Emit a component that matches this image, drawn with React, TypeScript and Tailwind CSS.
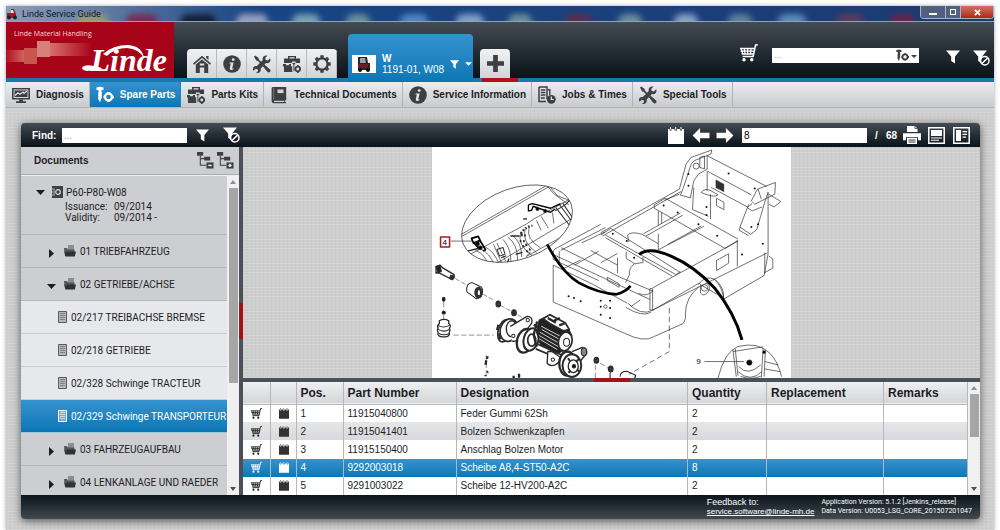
import type { ReactNode } from 'react';
import clsx from 'clsx';

type IconProps = { className?: string };

const Svg = ({ className, box = '0 0 18 18', children }: IconProps & { box?: string; children: ReactNode }) => (
  <svg viewBox={box} className={clsx('shrink-0', className)} fill="currentColor" aria-hidden="true">
    {children}
  </svg>
);

const HomeIcon = ({ className }: IconProps) => (
  <Svg className={className}>
    <path d="M9 .8 18 8.600l-1 1.200L9 3 1 9.800 0 8.600z" />
    <path d="M13.200 1h2.300v4l-2.300-2z" />
    <path fillRule="evenodd" d="M2.800 9.600 9 4.400l6.200 5.200V18h-4v-5.600H6.800V18h-4zM6.800 8.400v2h4.400v-2z" />
  </Svg>
);

const InfoIcon = ({ className }: IconProps) => (
  <Svg className={className}>
    <circle cx="9" cy="9" r="8.800" />
    <circle cx="10.200" cy="4.600" r="1.400" fill="#e4e5e7" />
    <path d="M6.600 7.500h4L9.300 13c-.2 1 .5.800 1.300.2v.8c-1.500 1.300-4.300 1.300-3.800-.8l1-4.600H6.500z" fill="#e4e5e7" />
  </Svg>
);

const ToolsIcon = ({ className }: IconProps) => (
  <Svg className={className}>
    <path d="M1 1.600 2.300.5l3.300 2.600.2 1.400 4 4-1.200 1.200-4-4-1.400-.2z" />
    <path d="m9.800 11.200 1.600-1.600 5.700 4.900c1.500 1.500-1.100 4.100-2.600 2.600z" />
    <path d="M17.200 3.300 14.800 5.600 12.700 5l-.5-2.100L14.500.6c-3-1-5.600 1.500-4.700 4.400L3.900 11c-3.300-.6-4.800 2.400-3.400 4.800l2.200-2 1.900.5.500 2-2 1.300c3 1.100 5.100-1 4.600-4L13 8.100c3.200.8 5.300-1.900 4.200-4.800z" />
  </Svg>
);

const ToolboxIcon = ({ className }: IconProps) => (
  <Svg className={className}>
    <path fillRule="evenodd" d="M5 3.500V1h8v2.500h4V8h-4.500V6.500H9V8H1V3.500zm1.500 0h5v-1.200h-5z" />
    <path d="M0 9h3v1.200h3V9h2v2.300h1.300V17H1v-5.600H0z" />
    <path d="M9 7.500h3.800v1.800h-1v6.500l-.9 1-.9-1V9.300H9z" stroke="#e0e1e4" strokeWidth=".8" />
    <circle cx="14.800" cy="14" r="2.300" fill="#e0e1e4" stroke="currentColor" strokeWidth="1.700" />
    <path d="M14 10h1.600v1.400H14zM14 16.500h1.600V18H14zM11.500 13.200h1.300v1.600h-1.300zM16.800 13.200H18v1.600h-1.200z" />
  </Svg>
);

const GearIcon = ({ className }: IconProps) => (
  <Svg className={className}>
    <circle cx="9" cy="9" r="5.600" fill="none" stroke="currentColor" strokeWidth="2.200" />
    {[0, 45, 90, 135, 180, 225, 270, 315].map((deg) => (
      <path key={deg} d="M7.300.3h3.400v3H7.300z" transform={`rotate(${deg} 9 9)`} />
    ))}
  </Svg>
);

const ScrewIcon = ({ className }: IconProps) => (
  <Svg className={className}>
    <path d="M.5 1.500Q4 0 7.500 1.500V4h-2v1.500l.6.800-.6.800.6.800-.6.800.6.800-.6.800.6.800-.6.800L4 16.500l-1.500-3-.6-.8.6-.8-.6-.8.6-.8-.6-.8.600-.8-.6-.8.600-.8V4h-2z" />
    <circle cx="12.500" cy="11" r="3.500" fill="none" stroke="currentColor" strokeWidth="2.400" />
    <path d="M11.200 6h2.600v2h-2.600zM11.200 14h2.600v2h-2.600zM7.500 9.700h2v2.600h-2zM15.500 9.700H18v2.600h-2.500z" />
  </Svg>
);

const MonitorIcon = ({ className }: IconProps) => (
  <Svg className={className}>
    <path fillRule="evenodd" d="M0 2h18v11.500H0zm1.600 1.600v8.300h14.800V3.600z" />
    <path d="M2.500 4.400h13v6.600h-13z" />
    <path d="m3 9.500 3-2.700 2 1.500L11 6l1 1.400L15 5" fill="none" stroke="#e4e5e7" strokeWidth="1.200" />
    <path d="M7 13.500h4v1.700h3V17H4v-1.800h3z" />
  </Svg>
);

const BookIcon = ({ className }: IconProps) => (
  <Svg className={className}>
    <path d="M2.500 1h13.700v13.500h-1.400V16H16v1.200H3.500Q1.600 17 1.600 15V2z" />
    <path d="M7.500 3.500h6v3.600h-6z" fill="#d5d6d9" />
    <path d="M4 14.800h10v1.200H4z" fill="#d5d6d9" />
    <path d="M3.700 2v11.500" stroke="#8a8c90" strokeWidth=".7" />
  </Svg>
);

const JobsIcon = ({ className }: IconProps) => (
  <Svg className={className}>
    <path d="M1 1h8v12M1 1v14.500h7" fill="none" stroke="currentColor" strokeWidth="1.500" />
    <path d="M2.800 4h4.600M2.800 6.500h4.600M2.800 9h4.600M2.800 12h4" stroke="currentColor" strokeWidth="1.400" />
    <path d="M10 3h2.500v6h-1.400V4.400H10z" />
    <circle cx="13.300" cy="13.300" r="4.400" />
    <path d="M13.300 10.500v3h2.400" fill="none" stroke="#e4e5e7" strokeWidth="1.200" />
  </Svg>
);

const CartIcon = ({ className }: IconProps) => (
  <Svg className={className}>
    <path d="M17.800.7 15.600 1l-2.500 11.500H2.600" fill="none" stroke="currentColor" strokeWidth="1.500" />
    <path d="M0 4.500h14.500M.7 7.200h13.500M1.600 10h12M1 4.500l2 6M4.300 4.500l.8 6M7.700 4.500v6M11 4.500l-.5 6" fill="none" stroke="currentColor" strokeWidth="1.300" />
    <circle cx="4" cy="15.800" r="1.700" />
    <circle cx="11.800" cy="15.800" r="1.700" />
  </Svg>
);

const FilterIcon = ({ className }: IconProps) => (
  <Svg className={className} box="0 0 14 14">
    <path d="M0 .5h14L9 6.500v7L5.200 11V6.500z" />
  </Svg>
);

const FilterOffIcon = ({ className }: IconProps) => (
  <Svg className={className} box="0 0 17 16">
    <path d="M0 .5h14L9 6.500v7L5.200 11V6.500z" />
    <circle cx="11.800" cy="10.800" r="4.200" fill="#161f27" stroke="currentColor" strokeWidth="1.500" />
    <path d="m9 13.500 5.600-5.400" stroke="currentColor" strokeWidth="1.500" />
  </Svg>
);

const NotepadIcon = ({ className }: IconProps) => (
  <Svg className={className} box="0 0 16 17">
    <path d="M0 2h1.500v1.500h2V2h3v1.500h2.500V2h3v1.500h2V2h2v15H0z" />
    <path d="M2.500 0v2.500M7.700 0v2.500M13 0v2.500" stroke="currentColor" strokeWidth="1.100" />
  </Svg>
);

const ArrowIcon = ({ className }: IconProps) => (
  <Svg className={className} box="0 0 18 16">
    <path d="m0 8 8-8v5h10v6H8v5z" />
  </Svg>
);

const PrinterIcon = ({ className }: IconProps) => (
  <Svg className={className} box="0 0 18 18">
    <path d="M4 0h8l2.500 2.500V6H4zM0 7.200h18v7h-3v-3H3v3H0z" />
    <path d="M4 12h10v6H4z" />
    <path d="M5.500 14h7M5.500 16h7" stroke="#1a232b" strokeWidth=".9" />
    <path d="M12 0v2.500h2.500" fill="none" stroke="#1a232b" strokeWidth=".7" />
  </Svg>
);

const SplitRowsIcon = ({ className }: IconProps) => (
  <Svg className={className} box="0 0 17 17">
    <path d="M.8.800h15.400v15.400H.8z" fill="none" stroke="currentColor" strokeWidth="1.500" />
    <path d="M3 3h11v6H3zM3 10.500h11v1H3zM3 12.800h8v1H3z" />
  </Svg>
);

const SplitColsIcon = ({ className }: IconProps) => (
  <Svg className={className} box="0 0 17 17">
    <path d="M.8.800h15.400v15.400H.8z" fill="none" stroke="currentColor" strokeWidth="1.500" />
    <path d="M3 3h5v11H3zM9.500 4h4.500v1.200H9.500zM9.500 6.800h4.500V8H9.500zM9.500 9.500h3.500v1.200H9.500z" />
  </Svg>
);

const TreeIcon = ({ className, plus }: IconProps & { plus?: boolean }) => (
  <Svg className={className}>
    <path d="M0 0h6.500v4H0zM7.500 5h6.500v4H7.500z" />
    <path d="M3.500 4v10h6M3.500 7h4" fill="none" stroke="currentColor" strokeWidth="1.100" />
    <path d="M10 11h7.500v6.500H10z" />
    <path d={plus ? 'M12 14.200h3.500M13.700 12.500V16' : 'M12 14.200h3.500'} stroke="#e8e9eb" strokeWidth="1.600" />
  </Svg>
);

const FolderIcon = ({ className }: IconProps) => (
  <Svg className={className} box="0 0 12 12">
    <path d="M4 0h6v5H4z" fill="#8b8d90" />
    <path d="M0 3h3l1 1.500h6.500V11H1z" fill="#55575a" />
    <path d="m0 5.500 1.500 6h9.300l1.200-5H3L1.800 8z" fill="#2f3133" />
  </Svg>
);

const DocIcon = ({ className }: IconProps) => (
  <Svg className={className} box="0 0 9 12">
    <path d="M.5.500h8v11h-8z" fill="currentColor" fillOpacity=".35" stroke="currentColor" />
    <path d="M2 2.500h5M2 4.500h5M2 6.500h5M2 8.500h5" stroke="currentColor" strokeWidth="1.200" opacity=".6" />
  </Svg>
);

const navItems = [
  { label: 'Diagnosis', icon: MonitorIcon },
  { label: 'Spare Parts', icon: ScrewIcon, active: true },
  { label: 'Parts Kits', icon: ToolboxIcon },
  { label: 'Technical Documents', icon: BookIcon },
  { label: 'Service Information', icon: InfoIcon },
  { label: 'Jobs & Times', icon: JobsIcon },
  { label: 'Special Tools', icon: ToolsIcon },
];

const quickTabs = [
  { label: 'Home', icon: HomeIcon },
  { label: 'Information', icon: InfoIcon },
  { label: 'Tools', icon: ToolsIcon },
  { label: 'Kits', icon: ToolboxIcon },
  { label: 'Settings', icon: GearIcon },
];

const parts = [
  { pos: 1, number: '11915040800', name: 'Feder Gummi 62Sh', qty: 2 },
  { pos: 2, number: '11915041401', name: 'Bolzen Schwenkzapfen', qty: 2 },
  { pos: 3, number: '11915150400', name: 'Anschlag Bolzen Motor', qty: 2 },
  { pos: 4, number: '9292003018', name: 'Scheibe A8,4-ST50-A2C', qty: 8, selected: true },
  { pos: 5, number: '9291003022', name: 'Scheibe 12-HV200-A2C', qty: 2 },
];

const documents = [
  { label: '02/217 TREIBACHSE BREMSE' },
  { label: '02/218 GETRIEBE' },
  { label: '02/328 Schwinge TRACTEUR' },
  { label: '02/329 Schwinge TRANSPORTEUR', selected: true },
];

// desktop icons shining through the glass title bar
const glassSpots = [
  'left-[70px] w-8 bg-[#a8a06a]',
  'left-[120px] w-8 bg-[#7c1f3a]',
  'left-[174px] w-9 bg-[#0b1220]',
  'left-[230px] w-8 bg-[#b9b6cf]',
  'left-[286px] w-7 bg-[#8fb9c4]',
  'left-[340px] w-6 bg-[#7fa3a6]',
  'left-[394px] w-7 bg-[#5f97d4]',
  'left-[450px] w-7 bg-[#9ab8dc]',
  'left-[502px] w-6 bg-[#7fa3a6]',
  'left-[558px] w-7 bg-[#6b2a48]',
  'left-[612px] w-6 bg-[#7fa3a6]',
  'left-[668px] w-6 bg-[#a4bddd]',
  'left-[722px] w-6 bg-[#6f94a6]',
  'left-[772px] w-7 bg-[#6aa0c8]',
  'left-[830px] w-7 bg-[#6b3a58]',
  'left-[884px] w-6 bg-[#7c1f3a]',
];

const darkBar = 'bg-linear-to-b from-[#454c53] to-[#0b131a]';
const blueFill = 'bg-linear-to-b from-[#3492cf] to-[#0877b5]';
const canvasTexture =
  'bg-[#cecece] bg-[repeating-linear-gradient(0deg,rgba(255,255,255,.14)_0_1px,transparent_1px_3px),repeating-linear-gradient(90deg,rgba(120,120,120,.05)_0_1px,transparent_1px_4px)]';

const TitleBar = () => (
  <div className="relative flex h-4 shrink-0 items-center justify-between overflow-hidden border-b border-[#8ea3b8] bg-linear-to-r from-[#8f9db8] via-[#174684] via-25% to-[#1c3a72]">
    {glassSpots.map((spot) => (
      <span key={spot} className={clsx('absolute top-2 h-4 rounded-full opacity-80 blur-[3px]', spot)} />
    ))}
    <div className="relative flex items-center gap-1">
      <svg viewBox="0 0 12 12" className="h-3 w-3" aria-hidden="true">
        <path d="M1 5h4V1h3l2 5v4H1z" fill="#a3172c" />
        <path d="M5 2h2l1 3H5z" fill="#e3e6ec" />
        <circle cx="3" cy="9.500" r="2" fill="#222" />
        <circle cx="9" cy="9.500" r="2" fill="#222" />
      </svg>
      <span className="font-[Roboto,sans-serif] text-[9px] leading-3 text-[#0c1422]">Linde Service Guide</span>
    </div>
    <div className="relative flex h-[13px] self-start overflow-hidden rounded-b border border-t-0 border-[#a9b3c6]">
      <button type="button" aria-label="Minimize" className="flex w-6 items-center justify-center bg-[#51607f]">
        <span className="mt-1 h-[2px] w-2 bg-white" />
      </button>
      <button type="button" aria-label="Restore" className="flex w-4 items-center justify-center border-x border-[#a9b3c6] bg-[#51607f]">
        <span className="h-[6px] w-[6px] border border-white" />
      </button>
      <button type="button" aria-label="Close" className="flex w-8 items-center justify-center bg-linear-to-b from-[#d0705f] to-[#ad2512] text-white">
        <svg viewBox="0 0 8 8" className="h-[7px] w-[7px]" aria-hidden="true">
          <path d="m1 1 6 6M7 1 1 7" stroke="currentColor" strokeWidth="2" />
        </svg>
      </button>
    </div>
  </div>
);

const Logo = () => (
  <div className="relative w-[168px] shrink-0 overflow-hidden bg-[#a80419]">
    <svg viewBox="0 0 168 56" className="absolute inset-0 h-full w-full" aria-hidden="true">
      <defs>
        <linearGradient id="tail">
          <stop offset="0" stopColor="#e58a80" stopOpacity=".8" />
          <stop offset="1" stopColor="#e58a80" stopOpacity="0" />
        </linearGradient>
        <linearGradient id="lead">
          <stop offset="0" stopColor="#e58a80" stopOpacity=".1" />
          <stop offset="1" stopColor="#e58a80" stopOpacity=".7" />
        </linearGradient>
      </defs>
      <path d="M0 28h18v12H0z" fill="url(#lead)" />
      <path d="M18 26h13v16H18z" fill="#c8564f" />
      <path d="M31 19h13v16H31z" fill="#d98078" />
      <path d="M44 21h42v13H44z" fill="url(#tail)" />
      <path d="M97 32q10-9 25-9 14 1 16 13-5-9-17-10-12 0-20 8z" fill="#fff" />
      <path d="M76 46q2-4 12-2l8 2-2 2q-8 0-13 1-5-1-5-3z" fill="#fff" />
    </svg>
    <div className="relative flex h-full flex-col justify-between pt-1 pr-[7px] pl-2">
      <span className="font-['Open_Sans',sans-serif] text-[7px] leading-4 text-[#f3d5d5]">Linde Material Handling</span>
      <span className="self-end font-['Liberation_Serif',serif] text-[32px] leading-9 font-bold text-white italic">Linde</span>
    </div>
  </div>
);

const Header = () => (
  <header className={clsx('flex h-[60px] shrink-0 border-b-4 border-[#1b76ab]', darkBar)}>
    <Logo />
    <div className="ml-[13px] flex items-end gap-[11px]">
      <nav className="flex h-[29px] overflow-hidden rounded-t bg-linear-to-b from-[#f0f1f2] to-[#d3d4d8]">
        {quickTabs.map(({ label, icon: Icon }) => (
          <button key={label} type="button" aria-label={label} className="flex w-[30px] items-center justify-center border-r border-[#b7b9bd] text-[#3d3f42]">
            <Icon className="h-[18px] w-[18px]" />
          </button>
        ))}
      </nav>
      <div className={clsx('-mb-1 flex h-12 w-[125px] items-center gap-[6px] rounded-t pt-3 pl-1', blueFill)}>
        <svg viewBox="0 0 24 18" className="h-[18px] w-6 shrink-0 bg-white" aria-hidden="true">
          <path d="M6 2h9l1 6h2v7H6z" fill="#2b2426" />
          <path d="M8 3h5l1 5H8z" fill="#9aa0a6" />
          <path d="M6 9h10v4H6z" fill="#6b1c24" />
          <circle cx="8" cy="15" r="2" fill="#111" />
          <circle cx="16" cy="15" r="2" fill="#111" />
        </svg>
        <div className="grow text-[10px] leading-[11px] whitespace-nowrap text-white">
          <p className="font-bold">W</p>
          <p>1191-01, W08</p>
        </div>
        <button type="button" aria-label="Filter machine" className="text-white">
          <FilterIcon className="h-[9px] w-[9px]" />
        </button>
        <button type="button" aria-label="Machine menu" className="mr-1 text-white">
          <Svg box="0 0 8 4" className="h-1 w-[7px]">
            <path d="M0 0h8L4 4z" />
          </Svg>
        </button>
      </div>
      <div className="relative -ml-1 flex">
        <button type="button" aria-label="New tab" className="flex h-[29px] w-[30px] items-center justify-center rounded-t bg-linear-to-b from-[#f0f1f2] to-[#d3d4d8] text-[#3d3f42]">
          <Svg className="h-[17px] w-[17px]">
            <path d="M6.500 0h5v6.500H18v5h-6.500V18h-5v-6.500H0v-5h6.500z" />
          </Svg>
        </button>
        <span className="absolute -bottom-1 left-[2px] h-1 w-9 bg-[#b3121d]" />
      </div>
    </div>
    <div className="mt-[22px] mr-1 ml-auto flex items-start text-white">
      <button type="button" aria-label="Shopping cart">
        <CartIcon className="h-[18px] w-[18px]" />
      </button>
      <div className="mt-1 ml-[14px] flex h-[15px] w-[147px] bg-white">
        <input aria-label="Search parts" placeholder="..." className="min-w-0 grow px-[2px] text-[9px] text-black outline-none placeholder:text-gray-400" />
        <button type="button" aria-label="Search type" className="flex items-center gap-[2px] pr-[2px] text-[#3d3f42]">
          <ScrewIcon className="h-[13px] w-[13px]" />
          <Svg box="0 0 6 3" className="mt-[2px] h-[3px] w-[6px]">
            <path d="M0 0h6L3 3z" />
          </Svg>
        </button>
      </div>
      <button type="button" aria-label="Apply filter" className="mt-[6px] ml-[27px]">
        <FilterIcon className="h-[14px] w-[14px]" />
      </button>
      <button type="button" aria-label="Clear filter" className="mt-[6px] ml-[13px]">
        <FilterOffIcon className="h-4 w-[17px]" />
      </button>
    </div>
  </header>
);

const MainNav = () => (
  <nav className="flex h-[26px] shrink-0 border-b border-[#b4b5b8] bg-linear-to-b from-[#ecedef] to-[#c9cacf]">
    {navItems.map(({ label, icon: Icon, active }) => (
      <a
        key={label}
        href="#"
        className={clsx(
          'flex items-center gap-[6px] border-r pr-[5px] pl-[6px] text-[10px] font-bold whitespace-nowrap',
          active ? ['border-[#1b84c0] text-white', blueFill] : 'border-[#b1b3b7] text-[#1c1d1f]',
        )}
      >
        <Icon className={clsx('h-[18px] w-[18px]', !active && 'text-[#3d3f42]')} />
        {label}
      </a>
    ))}
  </nav>
);

const PanelToolbar = () => (
  <div className={clsx('flex h-6 shrink-0 items-center rounded-t-sm pr-[10px] pl-[11px] text-white', darkBar)}>
    <label htmlFor="find" className="w-[30px] text-[10px] font-bold">Find:</label>
    <input id="find" placeholder="..." className="h-[15px] w-[125px] bg-white px-[2px] text-[10px] text-black outline-none placeholder:text-gray-400" />
    <button type="button" aria-label="Find" className="ml-[9px]">
      <FilterIcon className="h-[13px] w-[13px]" />
    </button>
    <button type="button" aria-label="Reset find" className="ml-[14px]">
      <FilterOffIcon className="h-4 w-[17px]" />
    </button>
    <button type="button" aria-label="Notes" className="ml-auto">
      <NotepadIcon className="h-[17px] w-4" />
    </button>
    <button type="button" aria-label="Previous page" className="ml-2">
      <ArrowIcon className="h-[15px] w-[18px]" />
    </button>
    <button type="button" aria-label="Next page" className="ml-[6px]">
      <ArrowIcon className="h-[15px] w-[18px] rotate-180" />
    </button>
    <input aria-label="Page" defaultValue="8" className="ml-2 h-[15px] w-[125px] bg-white px-[2px] text-[10px] text-black outline-none" />
    <span className="ml-2 flex gap-2 text-[10px] font-bold">
      <span>/</span>
      <span>68</span>
    </span>
    <button type="button" aria-label="Print" className="ml-[6px]">
      <PrinterIcon className="h-[18px] w-[18px]" />
    </button>
    <button type="button" aria-label="Split rows" className="ml-[7px]">
      <SplitRowsIcon className="h-[17px] w-[17px]" />
    </button>
    <button type="button" aria-label="Split columns" className="ml-2">
      <SplitColsIcon className="h-[17px] w-[17px]" />
    </button>
  </div>
);

const ScrollBar = ({ thumb }: { thumb: string }) => (
  <div className="flex w-3 shrink-0 flex-col items-center bg-[#f0f0f1] py-1 text-[#4d4f52]">
    <Svg box="0 0 6 4" className="h-1 w-[6px] text-[#8d8f92]">
      <path d="M3 0l3 4H0z" />
    </Svg>
    <div className="my-1 min-h-0 w-[9px] grow">
      <div className={clsx('bg-[#a6a6a7]', thumb)} />
    </div>
    <Svg box="0 0 6 4" className="h-1 w-[6px]">
      <path d="M0 0h6L3 4z" />
    </Svg>
  </div>
);

const FolderRow = ({ label, open }: { label: string; open?: boolean }) => (
  <li className="flex h-[33px] shrink-0 items-center border-b border-[#b3b5b9] bg-[#cdced2] pl-[26px]">
    <Svg box="0 0 9 9" className={clsx('mt-1 mr-2 h-[9px] w-[9px]', open && 'rotate-90')}>
      <path d="M2 0l5 4.500L2 9z" />
    </Svg>
    <FolderIcon className="mr-1 h-3 w-3" />
    {label}
  </li>
);

const Sidebar = () => (
  <aside className="flex min-h-0 w-[218px] shrink-0 flex-col bg-[#cdced2] text-[#1c1d1f]">
    <div className="flex h-7 shrink-0 items-center border-b border-[#a9abaf] pr-[5px] pl-[13px]">
      <h2 className="grow text-[10px] font-bold">Documents</h2>
      <button type="button" aria-label="Collapse all" className="mr-[3px] text-[#3d3f42]">
        <TreeIcon className="h-[17px] w-[17px]" />
      </button>
      <button type="button" aria-label="Expand all" className="text-[#3d3f42]">
        <TreeIcon plus className="h-[17px] w-[17px]" />
      </button>
    </div>
    <div className="flex min-h-0 grow border-t border-[#eeeff0]">
      <ul className="flex min-h-0 min-w-0 grow flex-col overflow-hidden font-[Roboto,sans-serif] text-[10px] whitespace-nowrap">
        <li className="h-[59px] shrink-0 border-b border-[#b3b5b9] pt-[10px] pl-[15px] leading-[11px]">
          <div className="flex items-center">
            <Svg box="0 0 9 5" className="mr-[6px] h-[5px] w-[9px]">
              <path d="M0 0h9L4.500 5z" />
            </Svg>
            <Svg box="0 0 12 12" className="mr-[3px] h-3 w-3 text-[#3d3f42]">
              <path d="M1 0h11v12H1z" />
              <circle cx="7" cy="6" r="2.300" fill="none" stroke="#d5d6d9" strokeWidth="1.200" />
              <path d="M3 2v8M0 3h2M0 6h2M0 9h2" stroke="#d5d6d9" strokeWidth=".8" />
            </Svg>
            P60-P80-W08
          </div>
          <dl className="mt-[3px] ml-[29px] grid grid-cols-[49px_auto] leading-[11px]">
            <dt>Issuance:</dt>
            <dd>09/2014</dd>
            <dt>Validity:</dt>
            <dd>09/2014 -</dd>
          </dl>
        </li>
        <FolderRow label="01 TRIEBFAHRZEUG" />
        <FolderRow label="02 GETRIEBE/ACHSE" open />
        {documents.map((doc) => (
          <li
            key={doc.label}
            className={clsx(
              'flex h-[33px] shrink-0 items-center gap-1 border-b pl-[37px]',
              doc.selected ? ['border-[#9fcbe6] text-white', blueFill] : 'border-[#cbccd0] bg-[#e7e8eb]',
            )}
          >
            <DocIcon className={clsx('h-3 w-[9px]', !doc.selected && 'text-[#5a5c5f]')} />
            {doc.label}
          </li>
        ))}
        <FolderRow label="03 FAHRZEUGAUFBAU" />
        <FolderRow label="04 LENKANLAGE UND RAEDER" />
      </ul>
      <ScrollBar thumb="h-[66%]" />
    </div>
  </aside>
);

const ChassisDrawing = () => (
  <g transform="translate(600 145) scale(.3333)" strokeWidth="2">
    {/* rear wall */}
    <path d="M235 135l-235 130M240 142L5 275M235 135l20-75 15-20 62-22-3 12-50 20-8 8-25 75-8 20 32 8" />
    <path d="M268 160l10-50 14-20 26-15V35l178 92M320 82l130 70M318 80v60M330 130l108 58M328 150v75M278 130l-4 66 48 20" />
    <path d="M300 145q10-15 30-5l20 12q-10 10-50-7zM346 162v22l22 12v-22z" />
    <path d="M344 107l24 13v23l-24-12z" fill="#333" strokeWidth="1" />
    <path d="M450 170l18-35 54-20-2 35-60 30zM470 135l10 30M452 178l-14 12 14 10 30-12" />
    <path d="M442 180l-26 68 32 22 18-14 24-82 10-30v184l-12 65-120 70q-6-38-28-58M416 248l-2 10 28 16" />
    <path d="M502 150l36 22-20 16-16-8M502 335l12 8v28l-26 14M490 325v62M408 288v78" />
    <circle cx="285" cy="66" r="9" />
    <path d="M296 40v30l14 4V36z" />
    {/* cross beams */}
    <path d="M160 182l32-20 218 122M160 182v10l212 120 38-24M235 150l-45 18M0 272l30-20 208 132M14 272l210 118 14-8M14 280l200 115" />
    <path d="M172 200v42M182 204v34M128 268l110-62M135 275l110-62M168 318l140-72M172 268v46M200 300l100-55" />
    <path d="M80 272q12-12 44-2l48 28M80 272l4 20M410 290L155 430M498 325L155 496" />
    <path d="M346 348l36-20v28l-36 22z" />
    <path d="M76 322v20l26 16 24-4V338M100 358q-18 16-14 32l-12 25" />
    {/* front frame */}
    <path d="M-56 295L14 262M-120 318L14 250M-130 310l130-70M-130 310q-14 4-12 20v15L-6 408M-118 310l180 90 95 40M-142 330l290 135M-124 320v38M-142 362v110M-142 362l120 58 100 55" />
    <path d="M155 432v64h-8v-64zM-6 320l-72 42M-110 372l50-26M50 340v46M-30 318l80 44M0 355l50-28M155 440q-20 18-42 6M20 398l35 20v10l-35-20zM90 486l28-20" />
    <path d="M-142 472L70 565q60 30 90 10l85-38q10-10 8-30 0-48 40-80M80 475q40 40 75 22L295 415M75 488q48 30 75 15" />
    <path d="M292 420q20-30 50-15 28 24 25 55l-70-40M298 420v25q10 14 24-5 8-20-8-25" />
    <circle cx="310" cy="430" r="10" />
    <path d="M205 490v130L85 688" strokeDasharray="16 10" />
    <g fill="#111" stroke="none">
      {[[262, 90], [262, 125], [292, 240], [348, 274], [230, 205], [188, 184], [382, 88], [460, 133], [422, 330], [484, 298], [470, 240], [450, 248], [316, 188], [316, 212], [78, 290], [36, 268], [100, 340], [0, 468], [0, 486], [28, 468], [28, 490], [28, 520], [0, 510], [-96, 455], [-80, 460], [-60, 470]].map(
        ([x, y]) => <circle key={`${x}-${y}`} cx={x} cy={y} r="3" />,
      )}
    </g>
    <circle cx="14" cy="486" r="5" />
    {/* leader lines */}
    <g stroke="#000" strokeWidth="9">
      <path d="M115 330q30-25 95 5 70 30 130 95 60 75 82 155" />
      <path d="M-160 300q45 85 95 115 60 32 112 34 25-5 42-25" strokeWidth="8" />
    </g>
    {/* detail bubble 9 */}
    <path d="M350 700q20-80 60-95 60-15 95 20 25 25 35 70M395 615l10 80M402 612l8 80M485 610l-5 88M492 615l-4 80M395 620l90-14M412 665q28 30 66-5M410 680q36 34 72 0M418 694q28 12 60 0M490 650l40 10M490 672l46 8M310 650h118" />
    <circle cx="444" cy="653" r="8" fill="#000" />
    <circle cx="488" cy="622" r="4" fill="#000" />
    <path d="M58 695q0-16 20-16l26 12-4 12M105 690l-4 12" strokeWidth="3" />
    <circle cx="29" cy="672" r="7" fill="#333" />
    <path d="M29 675v25" />
  </g>
);

const BubbleDrawing = () => (
  <g transform="translate(430 145) scale(.3333)" strokeWidth="2">
    <clipPath id="bubble">
      <ellipse cx="260" cy="238" rx="172" ry="106" transform="rotate(-20 260 238)" />
    </clipPath>
    <ellipse cx="260" cy="238" rx="172" ry="106" transform="rotate(-20 260 238)" />
    <g clipPath="url(#bubble)">
      <path d="M90 272L355 120M92 278L358 126M345 118l24 30 46 34M350 118l30 36 50 20" />
      <path d="M110 335L290 238l20-14 110-60M190 362L425 222M318 228l14 30M332 216l22 36M366 205l4 32M300 322l-12 14 130-72" />
      <path d="M376 190l40 52M386 180l40 54M396 176l34 50M374 200l30-18 20-20" strokeWidth="3" />
      <path d="M136 318q30 10 40 50M150 312q30 15 42 50M166 308q26 14 40 50M190 300l25 58M200 296l26 54M218 285q24 25 24 68M232 278q30 20 30 70M246 272q28 22 28 66" />
      <path d="M200 315l18-6 6 20-16 6zM212 340l16-6" strokeWidth="3" />
      <path d="M272 262q-14 40 34 72M284 254q-10 40 34 70M296 250q-10 34 34 60" />
      <path d="M272 268q10-20 34-24M268 290h16M276 306l14-6M288 322l12-8M272 272l14 2" strokeWidth="7" strokeDasharray="5 5" />
      <path d="M240 275h28M256 330l20-6M112 320l40-10M180 368l60-6M226 368l10-26" strokeWidth="4" />
    </g>
    <path d="M294 182l12-4 54 14 30-14M294 182v18l10-2 4-12 52 18 14-10" stroke="#000" strokeWidth="4" />
    <circle cx="321" cy="194" r="5" fill="#000" />
    <circle cx="344" cy="200" r="5" fill="#000" />
    <path d="M278 224h12" strokeWidth="4" />
    <path d="M124 282l20-6 6 12-20 8zM130 294l18 20M148 286l18 30-8 4" stroke="#000" strokeWidth="5" />
    <circle cx="142" cy="298" r="6" fill="#000" />
    <circle cx="150" cy="310" r="6" fill="#000" />
    <path d="M62 290h64" />
  </g>
);

const AxleDrawing = () => (
  <g transform="translate(430 255) scale(.3333)" strokeWidth="3">
    <path d="M18 36l12-4 8 8 34 20v10l-8 4-38-20-8 2z" strokeWidth="4" />
    <path d="M18 36l12-4 4 18-10 6z" fill="#222" />
    <path d="M62 62l10 2-4 12-10-4z" fill="#333" />
    <path d="M76 72l30 18M158 118l34 20M210 152l34 18M262 180l26 16" strokeWidth="1.500" strokeDasharray="14 6" />
    <path d="M110 112q-4-26 16-28l28 14q8 12-4 30l-12 4z" />
    <ellipse cx="145" cy="114" rx="11" ry="16" fill="#333" />
    <ellipse cx="146" cy="114" rx="5" ry="9" fill="#fff" />
    {[[204, 148], [251, 174], [497, 316], [540, 342]].map(([x, y]) => (
      <g key={x}>
        <ellipse cx={x} cy={y} rx="7" ry="9" fill="#333" />
        <ellipse cx={x} cy={y} rx="2" ry="4" fill="#bbb" />
      </g>
    ))}
    <ellipse cx="41" cy="134" rx="4" ry="6" fill="#111" />
    <ellipse cx="41" cy="174" rx="5" ry="4" fill="#111" />
    <path d="M41 142v28M41 180v14M70 241h120M168 300v60M508 325l26 14M494 330v50M536 354v20" strokeWidth="1.500" strokeDasharray="16 7" />
    <path d="M28 198q14-8 28 0v8q8 6 2 14 4 6 0 12 2 16-18 14-20 0-16-14-4-6 0-12-4-8 4-14z" strokeWidth="4" />
    <path d="M24 212q16 10 34 0M24 224q16 10 34 0M26 236q16 8 32 0" />
    {/* left hub */}
    <ellipse cx="222" cy="228" rx="18" ry="34" fill="#fff" strokeWidth="5" transform="rotate(15 222 228)" />
    <ellipse cx="236" cy="226" rx="26" ry="34" fill="#fff" strokeWidth="5" transform="rotate(15 236 226)" />
    <ellipse cx="244" cy="222" rx="16" ry="24" strokeWidth="4" />
    <path d="M240 215l50-30q18 0 14 20l-34 44q-10 12-26 10" fill="#fff" strokeWidth="4" />
    <circle cx="292" cy="196" r="5" />
    <circle cx="249" cy="243" r="5" />
    <path d="M204 210l-4 16M206 236l4 18" strokeWidth="6" />
    {/* brake drum */}
    <ellipse cx="284" cy="258" rx="24" ry="36" fill="#fff" strokeWidth="7" transform="rotate(15 284 258)" />
    <ellipse cx="302" cy="254" rx="22" ry="34" fill="#fff" strokeWidth="6" transform="rotate(15 302 254)" />
    <ellipse cx="304" cy="256" rx="12" ry="18" strokeWidth="5" />
    {/* motor */}
    <path d="M318 232l8-36 34-16 50 34 14 28-12 40-32 14-50-26z" fill="#222" />
    <path d="M332 214l68 36M330 222l68 38M328 232l66 38M326 242l62 36M326 252l54 32" stroke="#eee" strokeWidth="2.500" />
    <path d="M338 192l20-12 46 24 12 20-18 4-40-22z" fill="#fff" strokeWidth="5" />
    <path d="M352 190l24 14M370 198l18-8M386 212l16-6" strokeWidth="7" />
    <ellipse cx="404" cy="260" rx="20" ry="28" fill="#fff" strokeWidth="5" transform="rotate(15 404 260)" />
    <ellipse cx="408" cy="262" rx="9" ry="12" fill="#fff" />
    <path d="M320 200l-10 40 8 36M310 210l24 14" strokeWidth="7" />
    {/* axle and right hub */}
    <path d="M322 268l80 36M316 282l76 32" strokeWidth="5" />
    <path d="M352 290l-2 36q14 12 30 0l14-16-30-20z" fill="#fff" strokeWidth="4" />
    <circle cx="367" cy="314" r="5" />
    <path d="M424 290l30-12q16 2 14 18l-22 26" fill="#fff" strokeWidth="4" />
    <ellipse cx="460" cy="291" rx="8" ry="12" fill="#888" />
    <ellipse cx="410" cy="326" rx="24" ry="36" fill="#fff" strokeWidth="7" />
    <ellipse cx="424" cy="332" rx="28" ry="34" fill="#fff" strokeWidth="6" />
    <ellipse cx="428" cy="334" rx="15" ry="19" strokeWidth="4" />
    <circle cx="430" cy="334" r="5" fill="#111" />
    <path d="M412 310l6 8M444 312l-6 8M414 354l6-8M446 350l-6-6" strokeWidth="6" />
    <path d="M172 304l-2 8M168 316l-2 14M174 350l-4 2M166 360v4M250 362v10M266 356v12" strokeWidth="7" />
  </g>
);

const Diagram = () => (
  <div className={clsx('flex min-h-0 shrink grow basis-0 justify-center', canvasTexture)}>
    <svg viewBox="432 148 358 230" className="h-full bg-white" role="img" aria-label="Axle assembly">
      <g fill="none" stroke="#2a2a2a" strokeLinejoin="round">
        <ChassisDrawing />
        <BubbleDrawing />
        <AxleDrawing />
        <path d="M440.500 237.500h9v10h-9z" stroke="#a31e22" strokeWidth="1.500" />
      </g>
      <text x="442.500" y="245.500" className="text-[8px]">4</text>
      <text x="695" y="364.500" className="text-[8px]">9</text>
    </svg>
  </div>
);

const headCell = 'border-r border-[#b5b7ba] pl-1 text-left text-[12px] font-bold';

const PartsTable = () => (
  <div className="flex h-[113px] shrink-0 overflow-hidden bg-white text-[#1c1d1f]">
    <table className="w-full min-w-0 table-fixed border-collapse text-[10px]">
      <colgroup>
        <col className="w-[27px]" />
        <col className="w-[26px]" />
        <col className="w-[47px]" />
        <col className="w-[113px]" />
        <col />
        <col className="w-[79px]" />
        <col className="w-[117px]" />
        <col className="w-[84px]" />
      </colgroup>
      <thead>
        <tr className="h-[22px] border-b border-[#b5b7ba] bg-linear-to-b from-[#eeeff0] to-[#d4d6d9]">
          <th className={headCell} aria-label="Cart" />
          <th className={headCell} aria-label="Notes" />
          <th className={headCell}>Pos.</th>
          <th className={headCell}>Part Number</th>
          <th className={headCell}>Designation</th>
          <th className={headCell}>Quantity</th>
          <th className={headCell}>Replacement</th>
          <th className={headCell}>Remarks</th>
        </tr>
      </thead>
      <tbody>
        {parts.map((part) => (
          <tr
            key={part.pos}
            className={clsx(
              'h-[18px] *:border-r *:border-[#b5b7ba] *:py-0 *:pl-1',
              part.selected && ['text-white', blueFill],
              part.pos === 2 && 'bg-linear-to-b from-[#e6e7e9] to-[#d7d9dc]',
            )}
          >
            <td>
              <button type="button" aria-label={`Add ${part.number} to cart`} className="ml-1 block">
                <CartIcon className="h-[11px] w-[11px]" />
              </button>
            </td>
            <td>
              <button type="button" aria-label={`Note for ${part.number}`} className="ml-1 block">
                <NotepadIcon className={clsx('h-[11px] w-[10px]', !part.selected && 'text-[#333]')} />
              </button>
            </td>
            <td>{part.pos}</td>
            <td>{part.number}</td>
            <td>{part.name}</td>
            <td>{part.qty}</td>
            <td />
            <td />
          </tr>
        ))}
      </tbody>
    </table>
    <ScrollBar thumb="h-[48%]" />
  </div>
);

const Footer = () => (
  <footer className="flex h-6 shrink-0 items-center justify-end gap-[7px] rounded-b-sm bg-linear-to-b from-[#0d151c] to-[#414a51] pr-2 text-white">
    <div className="text-[9px] leading-[10px]">
      <p>Feedback to:</p>
      <a href="mailto:service.software@linde-mh.de" className="block text-[8px] leading-[10px] underline">service.software@linde-mh.de</a>
    </div>
    <div className="font-[Roboto,sans-serif] text-[7px] leading-[9px]">
      <p>Application Version: 5.1.2 [Jenkins_release]</p>
      <p>Data Version: U0053_LSG_CORE_201507201047</p>
    </div>
  </footer>
);

const App = () => (
  <div className="flex h-screen flex-col overflow-hidden bg-white px-[6px] pt-[6px] font-['Liberation_Sans',Arial,sans-serif]">
    <div className="flex min-h-0 grow flex-col shadow-[0_0_4px_#9aa4ae]">
      <TitleBar />
      <Header />
      <MainNav />
      <main className={clsx('flex min-h-0 grow flex-col pt-[15px] pr-[14px] pb-[11px] pl-[15px]', canvasTexture)}>
        <div className="flex min-h-0 grow flex-col rounded-sm shadow-[0_2px_8px_#555]">
          <PanelToolbar />
          <div className="flex min-h-0 grow bg-[#4b5157]">
            <Sidebar />
            <div className="flex w-1 shrink-0 items-center">
              <span className="h-9 w-full bg-[#a3121b]" />
            </div>
            <section className="flex min-w-0 grow flex-col">
              <Diagram />
              <div className="flex h-1 shrink-0 justify-center">
                <span className="h-full w-9 bg-[#a3121b]" />
              </div>
              <PartsTable />
            </section>
          </div>
          <Footer />
        </div>
      </main>
    </div>
  </div>
);

export default App;
